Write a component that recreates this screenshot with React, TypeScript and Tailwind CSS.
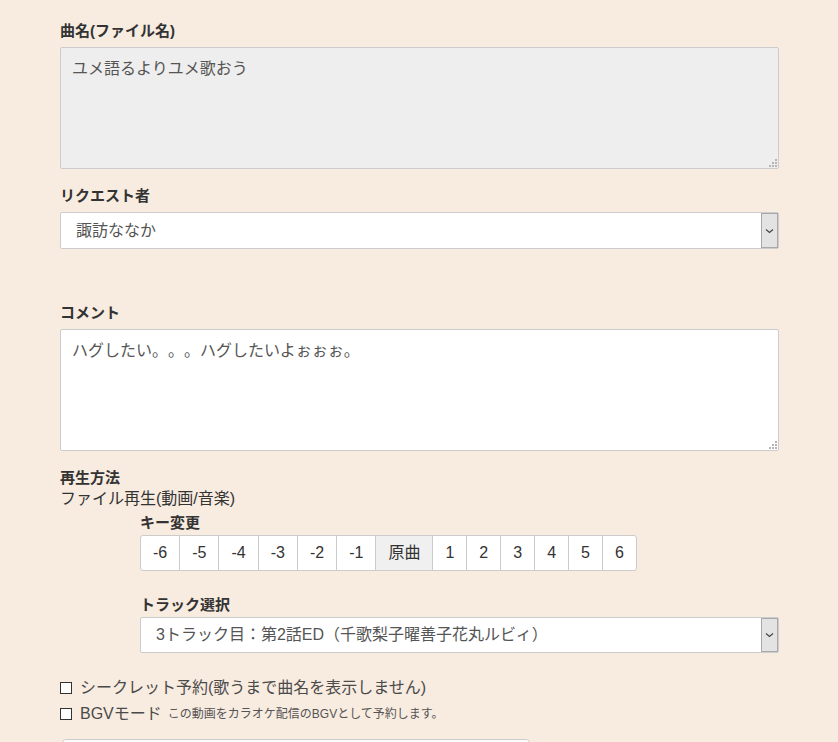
import React from 'react'

const keys = ['-6', '-5', '-4', '-3', '-2', '-1', '原曲', '1', '2', '3', '4', '5', '6']

function Grip() {
  return (
    <svg className="absolute right-[2px] bottom-[2px]" width="8" height="8" viewBox="0 0 8 8">
      <rect x="6" y="0" width="2" height="2" fill="#b5b5b5" />
      <rect x="3" y="3" width="2" height="2" fill="#b5b5b5" />
      <rect x="6" y="3" width="2" height="2" fill="#b5b5b5" />
      <rect x="0" y="6" width="2" height="2" fill="#b5b5b5" />
      <rect x="3" y="6" width="2" height="2" fill="#b5b5b5" />
      <rect x="6" y="6" width="2" height="2" fill="#b5b5b5" />
    </svg>
  )
}

function TextBox({ value, readOnly }: { value: string; readOnly?: boolean }) {
  return (
    <div className="relative">
      <textarea
        readOnly={readOnly}
        defaultValue={value}
        style={{ fontFamily: '"Noto Sans CJK JP", "Liberation Sans", sans-serif' }}
        className={
          'block w-full h-[122px] resize-none rounded-[2px] border border-[#cccccc] pt-[8px] px-[11px] text-[16px] leading-[22px] text-[#555555] outline-none [text-spacing-trim:space-all] ' +
          (readOnly ? 'bg-[#eeeeee]' : 'bg-white')
        }
      />
      <Grip />
    </div>
  )
}

function SelectBox({ value, height }: { value: string; height: string }) {
  return (
    <div className={'flex w-full rounded-[2px] border border-[#cccccc] bg-white ' + height}>
      <div className="flex flex-1 items-center pl-[15px] text-[16px] text-[#555555]">{value}</div>
      <div className="flex w-[17px] items-center justify-center border border-[#a8a8a8] bg-[#e3e3e3]">
        <svg width="9" height="6" viewBox="0 0 9 6">
          <path d="M1 1.5 L4.5 4.5 L8 1.5" stroke="#444" strokeWidth="1.2" fill="none" />
        </svg>
      </div>
    </div>
  )
}

function Label({ children, className = '' }: { children: React.ReactNode; className?: string }) {
  return <div className={'text-[15px] font-bold leading-[21px] text-[#333333] ' + className}>{children}</div>
}

export default function App() {
  return (
    <div
      className="min-h-screen bg-[#f8ebe0] pt-[20px] pl-[60px]"
      style={{ fontFamily: '"Liberation Sans", "Noto Sans CJK JP", sans-serif' }}
    >
      <div className="w-[719px]">
        <Label className="mb-[6px]">曲名(ファイル名)</Label>
        <TextBox value="ユメ語るよりユメ歌おう" readOnly />

        <Label className="mt-[16px] mb-[6px]">リクエスト者</Label>
        <SelectBox value="諏訪ななか" height="h-[37px]" />

        <Label className="mt-[53px] mb-[6px]">コメント</Label>
        <TextBox value="ハグしたい。。。ハグしたいよぉぉぉ。" />

        <Label className="mt-[16px]">再生方法</Label>
        <div className="text-[16px] leading-[22px] text-[#333333]">ファイル再生(動画/音楽)</div>

        <div className="ml-[80px]">
          <Label className="mt-[2px] mb-[2px]">キー変更</Label>
          <div className="flex">
            {keys.map((k, i) => (
              <button
                key={k}
                type="button"
                className={
                  'h-[36px] border border-[#cccccc] px-[12px] text-[16px] leading-[22px] text-[#333333] ' +
                  (i > 0 ? '-ml-px ' : 'rounded-l-[3px] ') +
                  (i === keys.length - 1 ? 'rounded-r-[3px] ' : '') +
                  (k === '原曲' ? 'bg-[#f0f0f0]' : 'bg-white')
                }
              >
                {k}
              </button>
            ))}
          </div>

          <Label className="mt-[23px] mb-[2px]">トラック選択</Label>
          <SelectBox value="3トラック目：第2話ED（千歌梨子曜善子花丸ルビィ）" height="h-[36px]" />
        </div>

        <div className="mt-[22px]">
          <div className="flex h-[26px] items-center">
            <span className="h-[12px] w-[12px] border border-[#333333] bg-white" />
            <span className="ml-[8px] text-[16px] text-[#4a4a4a]">シークレット予約(歌うまで曲名を表示しません)</span>
          </div>
          <div className="flex h-[26px] items-center">
            <span className="h-[12px] w-[12px] border border-[#333333] bg-white" />
            <span className="ml-[8px] text-[16px] text-[#4a4a4a]">BGVモード</span>
            <span className="ml-[6px] text-[12px] text-[#555555]">この動画をカラオケ配信のBGVとして予約します。</span>
          </div>
        </div>

        <div className="ml-[2px] mt-[12px] h-[40px] w-[468px] rounded-[4px] border border-[#cccccc] bg-white" />
      </div>
    </div>
  )
}
